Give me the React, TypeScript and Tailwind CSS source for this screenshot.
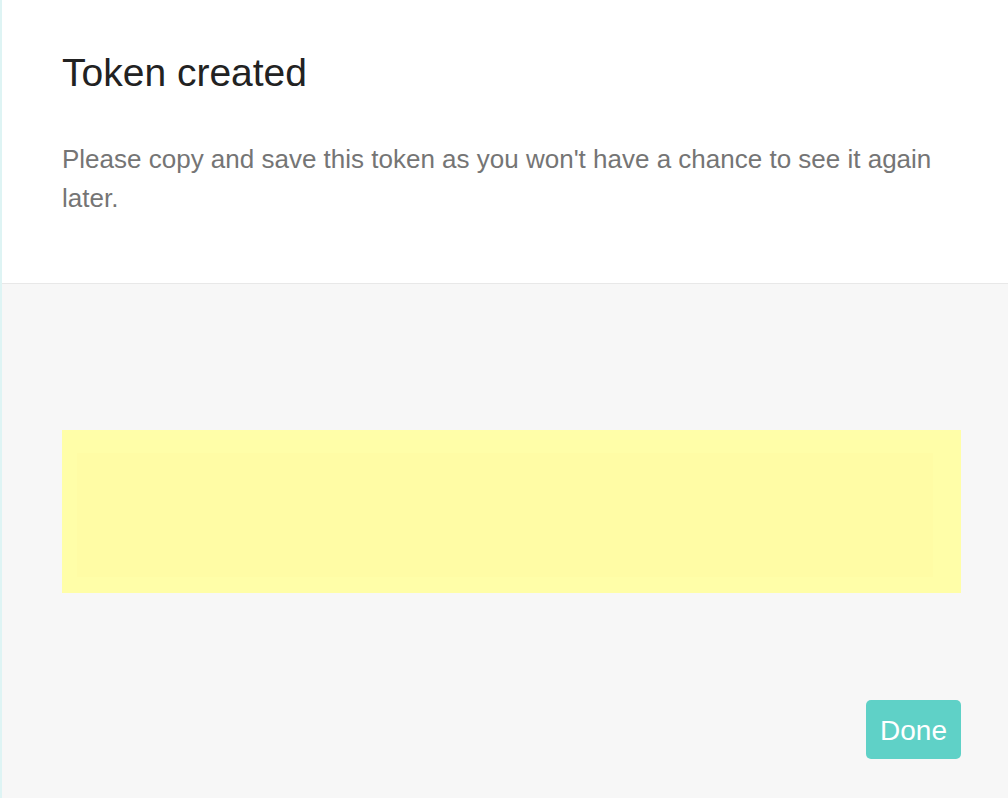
export default function App() {
  return (
    <div
      className="flex h-[798px] w-full overflow-hidden bg-white"
      style={{ fontFamily: '"Liberation Sans", Arial, sans-serif' }}
    >
      <div className="w-[2px] shrink-0 bg-[#def4f4]" />
      <div className="flex min-w-0 flex-1 flex-col">
        <header className="border-b border-[#e8e8e8] bg-white pl-[60px] pr-[46px] pt-[50px] pb-[65px]">
          <h1 className="text-[39px] leading-[1.2] font-normal text-[#222]">Token created</h1>
          <p className="mt-[43px] text-[26px] leading-[39px] text-[#757575]">
            Please copy and save this token as you won't have a chance to see it again later.
          </p>
        </header>
        <section className="flex flex-1 flex-col bg-[#f7f7f7] pl-[60px] pr-[47px] pt-[146px]">
          <div className="h-[163px] bg-[#fffea8] pl-[15px] pr-[28px] pt-[23px] pb-[16px]">
            <div className="h-full w-full bg-[#fffca5]" />
          </div>
          <div className="mt-[107px] flex justify-end">
            <button className="h-[59px] w-[95px] rounded-[5px] bg-[#5fd1c7] pt-[3px] text-[28px] text-white">
              Done
            </button>
          </div>
        </section>
      </div>
    </div>
  );
}
